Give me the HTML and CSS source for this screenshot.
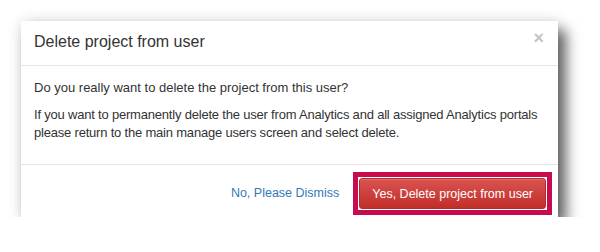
FILE: index.html
```html
<!DOCTYPE html>
<html lang="en">
<head>
<meta charset="utf-8">
<title>Delete project from user</title>
<link rel="stylesheet" href="styles.css">
</head>
<body>
<div class="modal">
  <div class="modal-header">
    <h4 class="modal-title">Delete project from user</h4>
    <span class="close">&times;</span>
  </div>
  <div class="modal-body">
    <p>Do you really want to delete the project from this user?</p>
    <p class="tight">If you want to permanently delete the user from Analytics and all assigned Analytics portals please return to the main manage users screen and select delete.</p>
  </div>
  <div class="modal-footer">
    <a class="btn-link">No, Please Dismiss</a>
    <span class="highlight"><button class="btn-danger">Yes, Delete project from user</button></span>
  </div>
</div>
</body>
</html>
```
FILE: styles.css
```css
html, body {
  margin: 0;
  padding: 0;
  background: #fff;
}
body {
  font-family: "Liberation Sans", Arial, sans-serif;
  color: #333;
}
.modal {
  margin: 21px 0 0 21px;
  width: 537px;
  background: #fff;
  box-shadow: 8px 9px 13px rgba(0, 0, 0, 0.6), 0 0 14px rgba(0, 0, 0, 0.12);
}
.modal-header {
  display: flex;
  align-items: center;
  justify-content: space-between;
  padding: 10px 13px 12px 13px;
  border-bottom: 1px solid #e5e5e5;
}
.modal-title {
  margin: 0;
  font-size: 16px;
  font-weight: normal;
  line-height: 22px;
  color: #333;
}
.close {
  font-size: 18px;
  font-weight: bold;
  line-height: 22px;
  color: #c4c4c4;
  margin-right: 1px;
  margin-top: -8px;
}
.modal-body {
  padding: 13px 4px 13px 13px;
  border-bottom: 1px solid #e5e5e5;
  font-size: 13px;
  line-height: 18px;
}
.modal-body p {
  margin: 0 0 9px 0;
}
.modal-body .tight {
  letter-spacing: -0.2px;
}
.modal-footer {
  display: flex;
  justify-content: flex-end;
  align-items: center;
  padding: 7px 6px 2px 13px;
}
.btn-link {
  font-size: 12.5px;
  color: #337ab7;
  margin-right: 14px;
  margin-top: -1px;
}
.highlight {
  display: block;
  border: 5px solid #c80a4f;
  padding: 1px;
  background: #fff;
}
.btn-danger {
  display: block;
  height: 31px;
  padding: 0 12px;
  font-family: "Liberation Sans", Arial, sans-serif;
  font-size: 12.5px;
  color: #fff;
  border: 1px solid #b52b27;
  border-radius: 3px;
  background: linear-gradient(to bottom, #d9534f 0%, #c12e2a 100%);
  box-shadow: inset 0 1px 0 rgba(255, 255, 255, 0.15);
}
```
